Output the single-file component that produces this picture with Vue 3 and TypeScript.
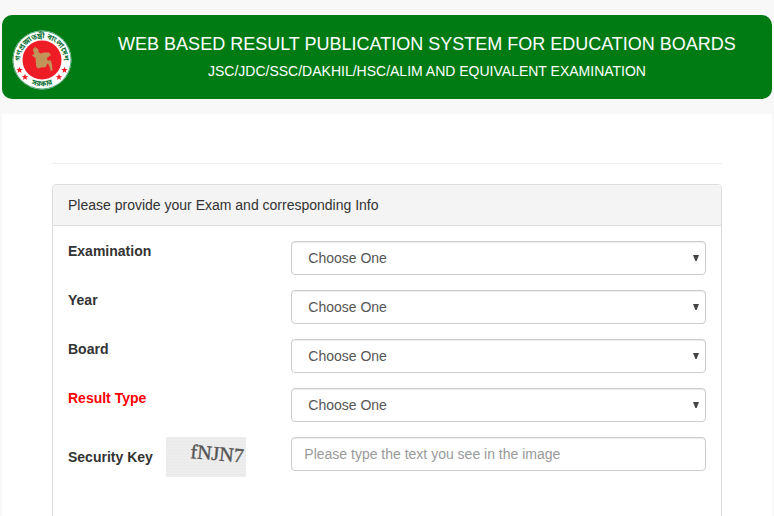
<script setup lang="ts">
import { reactive } from 'vue'

interface Field {
  id: string
  label: string
  required?: boolean
  options: string[]
}

const fields: Field[] = [
  { id: 'exam', label: 'Examination', options: [] },
  { id: 'year', label: 'Year', options: [] },
  { id: 'board', label: 'Board', options: [] },
  { id: 'result_type', label: 'Result Type', required: true, options: [] },
]

const form = reactive<Record<string, string>>({
  exam: '',
  year: '',
  board: '',
  result_type: '',
  captcha: '',
})
</script>

<template>
  <div class="page">
    <header class="banner">
      <svg class="seal" viewBox="0 0 60 60" aria-hidden="true">
        <defs>
          <path id="seal-top" d="M10.100 38 A21.500 21.500 0 1 1 49.900 38" />
          <path id="seal-bottom" d="M11 48 A26.200 26.200 0 0 0 49 48" />
        </defs>
        <circle cx="30" cy="30" r="29.5" fill="#fff" />
        <circle cx="30" cy="30" r="29" fill="none" stroke="#0b8040" stroke-width="0.7" />
        <circle cx="30" cy="30" r="19.5" fill="#ee1c25" />
        <path
          fill="#c1955a"
          d="M22.700 16.500L24.500 18L26.500 19.500L26.500 22L28.500 23.500L32 22.500L37 22.500L39 25L35 28L35.500 30.500L39 30.500L40 35L40.500 40L38.800 41.500L38 38L36.500 34.500L35 33.500L34.500 36L33 37.500L30 37.200L26 38.500L24.500 37L24 35L23.500 28L20 25.500L22.300 23.500L21 20.500L21 18.500L22.500 18.500z"
        />
        <text class="seal-text" font-size="7.5">
          <textPath href="#seal-top" startOffset="50%" text-anchor="middle">গণপ্রজাতন্ত্রী বাংলাদেশ</textPath>
        </text>
        <text class="seal-text" font-size="7.5">
          <textPath href="#seal-bottom" startOffset="50%" text-anchor="middle">সরকার</textPath>
        </text>
        <g fill="#ee1c25">
          <path id="seal-star" d="M7.500 36.800l.9 2.200 2.300.1-1.800 1.500.6 2.300-2-1.300-2 1.300.6-2.300-1.800-1.500 2.300-.1z" />
          <use href="#seal-star" x="5.500" y="7" />
          <use href="#seal-star" x="45" />
          <use href="#seal-star" x="39.500" y="7" />
        </g>
      </svg>
      <div class="titles">
        <h1>WEB BASED RESULT PUBLICATION SYSTEM FOR EDUCATION BOARDS</h1>
        <p>JSC/JDC/SSC/DAKHIL/HSC/ALIM AND EQUIVALENT EXAMINATION</p>
      </div>
    </header>

    <main class="content">
      <hr class="rule" />
      <form class="panel" @submit.prevent>
        <h2 class="panel-heading">Please provide your Exam and corresponding Info</h2>
        <div class="panel-body">
          <div v-for="field in fields" :key="field.id" class="row">
            <label :for="field.id" :class="{ required: field.required }">{{ field.label }}</label>
            <div class="select-wrap">
              <select :id="field.id" v-model="form[field.id]" class="control select">
                <option value="">Choose One</option>
                <option v-for="option in field.options" :key="option">{{ option }}</option>
              </select>
              <svg class="arrow" viewBox="0 0 6 6" aria-hidden="true">
                <path d="M0 0h6L3.600 6H2.400z" fill="#444" />
              </svg>
            </div>
          </div>
          <div class="row">
            <div class="security">
              <label for="captcha">Security Key</label>
              <svg class="captcha" viewBox="0 0 80 40">
                <defs>
                  <pattern id="noise" width="4" height="3" patternUnits="userSpaceOnUse">
                    <path d="M0 1.500h3" stroke="#e8e8e8" />
                  </pattern>
                </defs>
                <rect width="80" height="40" fill="#ededed" />
                <rect width="80" height="40" fill="url(#noise)" />
                <text class="captcha-text" x="24" y="21" transform="rotate(5 24 21)">fNJN7</text>
              </svg>
            </div>
            <input
              id="captcha"
              v-model="form.captcha"
              class="control"
              type="text"
              autocomplete="off"
              placeholder="Please type the text you see in the image"
            />
          </div>
        </div>
      </form>
    </main>
  </div>
</template>

<style>
body {
  margin: 0;
  background: #f8f8f8;
}
</style>

<style scoped>
.page {
  box-sizing: border-box;
  display: flex;
  flex-direction: column;
  gap: 15px;
  height: 100vh;
  overflow: hidden;
  padding: 15px 2px 0;
  color: #333;
  font-family: "Liberation Sans", Arial, sans-serif;
  font-size: 14px;
  line-height: 20px;
}

.banner {
  display: flex;
  align-items: center;
  flex: none;
  box-sizing: border-box;
  min-height: 84px;
  padding-left: 10px;
  border-radius: 10px;
  background: #007b14;
  color: #fff;
}

.seal {
  flex: none;
  width: 60px;
  height: 60px;
  margin: 6px 10px 0 0;
}

.seal-text {
  fill: #0b7035;
  font-family: "Noto Sans Bengali", "Noto Sans", sans-serif;
  font-weight: 700;
}

.titles {
  flex: 1;
  text-align: center;
}

h1 {
  margin: 0 0 2px;
  font-size: 18px;
  font-weight: 400;
  line-height: 26px;
}

p {
  margin: 0;
  line-height: 24px;
}

.content {
  flex: 1 0 auto;
  padding: 49px 50px 0;
  background: #fff;
}

.rule {
  margin: 0 0 20px;
  border: 0;
  border-top: 1px solid #eee;
}

.panel {
  border: 1px solid #ddd;
  border-radius: 4px;
}

.panel-heading {
  margin: 0;
  padding: 10px 15px;
  border-bottom: 1px solid #ddd;
  border-radius: 3px 3px 0 0;
  background: #f4f4f4;
  font-size: 14px;
  font-weight: 400;
}

.panel-body {
  display: grid;
  gap: 15px;
  min-height: 320px;
  align-content: start;
  padding: 15px;
}

.row {
  display: grid;
  grid-template-columns: 35% 65%;
  align-items: start;
  height: 34px;
}

label {
  font-weight: 700;
}

.required {
  color: #f00;
}

.control {
  box-sizing: border-box;
  display: block;
  width: 100%;
  height: 34px;
  padding: 6px 12px;
  border: 1px solid #ccc;
  border-radius: 4px;
  background: #fff;
  box-shadow: inset 0 1px 1px rgba(0, 0, 0, 0.075);
  color: #555;
  font: inherit;
}

.control::placeholder {
  color: #999;
  opacity: 1;
}

.select-wrap {
  position: relative;
}

.select {
  padding-left: 16px;
  appearance: none;
}

.arrow {
  position: absolute;
  top: 14px;
  right: 7px;
  width: 6px;
  height: 6px;
  pointer-events: none;
}

.security {
  display: flex;
  align-items: center;
  gap: 13px;
}

.captcha {
  width: 80px;
  height: 40px;
}

.captcha-text {
  fill: #555;
  stroke: #555;
  stroke-width: 0.4px;
  font-family: "Liberation Serif", serif;
  font-size: 20px;
}
</style>
